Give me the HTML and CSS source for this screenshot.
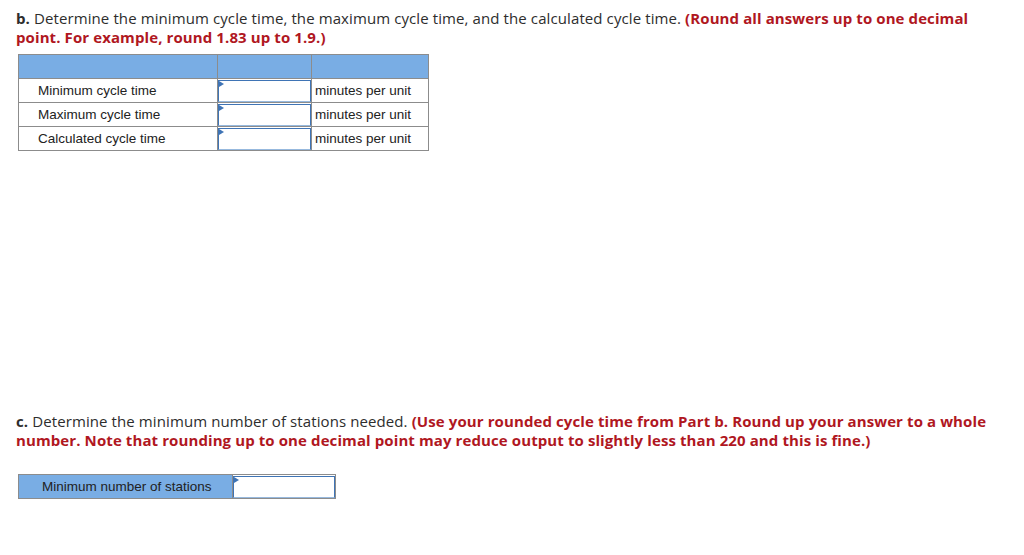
FILE: index.html
```html
<!DOCTYPE html>
<html>
<head>
<meta charset="utf-8">
<link rel="stylesheet" href="styles.css">
</head>
<body>
<div class="page">
  <section class="part part-b">
    <p class="question"><b>b.</b> Determine the minimum cycle time, the maximum cycle time, and the calculated cycle time. <span class="note">(Round all answers up to one decimal point. For example, round 1.83 up to 1.9.)</span></p>
    <table class="grid">
      <colgroup><col class="c-label"><col class="c-input"><col class="c-unit"></colgroup>
      <tr class="head"><th></th><th></th><th></th></tr>
      <tr><td class="label">Minimum cycle time</td><td class="inp"><div class="field"></div></td><td class="unit">minutes per unit</td></tr>
      <tr><td class="label">Maximum cycle time</td><td class="inp"><div class="field"></div></td><td class="unit">minutes per unit</td></tr>
      <tr><td class="label">Calculated cycle time</td><td class="inp"><div class="field"></div></td><td class="unit">minutes per unit</td></tr>
    </table>
  </section>
  <section class="part part-c">
    <p class="question"><b>c.</b> Determine the minimum number of stations needed. <span class="note">(Use your rounded cycle time from Part b. Round up your answer to a whole number. Note that rounding up to one decimal point may reduce output to slightly less than 220 and this is fine.)</span></p>
    <table class="grid small">
      <colgroup><col class="s-label"><col class="s-input"></colgroup>
      <tr><td class="label blue">Minimum number of stations</td><td class="inp"><div class="field"></div></td></tr>
    </table>
  </section>
</div>
</body>
</html>
```
FILE: styles.css
```css
html, body { margin: 0; padding: 0; background: #fff; }
.page { padding: 9px 16px 0 16px; }
.question {
  margin: 0;
  font-family: "Open Sans", Lato, sans-serif;
  font-size: 15px;
  line-height: 19px;
  color: #2d2d2d;
  max-width: 975px;
  letter-spacing: 0.1px;
}
.question b { font-weight: 700; }
.note { color: #b0171f; font-weight: 700; }
.grid {
  border-collapse: collapse;
  table-layout: fixed;
  margin-left: 2px;
  font-family: "Liberation Sans", Arial, sans-serif;
  font-size: 13.5px;
  color: #222;
}
.part-b .grid { margin-top: 7px; }
.grid td, .grid th { border: 1px solid #8c8c8c; height: 23px; padding: 0; }
.grid .head th { background: #79ade4; height: 23px; }
.c-label { width: 199px; }
.c-input { width: 94px; }
.c-unit { width: 117px; }
.label { padding-left: 19px !important; }
.unit { padding-left: 3px !important; }
.field {
  height: 20px;
  border: 1px solid #3f74b5;
  border-bottom-color: #97b9de;
  background: #fff;
  position: relative;
}
.field::before {
  content: "";
  position: absolute;
  left: 0; top: 0;
  border-left: 5px solid #3f74b5;
  border-top: 3px solid transparent;
  border-bottom: 3px solid transparent;
}
.part-c { margin-top: 261px; }
.small { margin-top: 24px; }
.s-label { width: 214px; }
.s-input { width: 103px; }
.small .label { padding-left: 23px !important; }
.small .blue { background: #79ade4; }
```
